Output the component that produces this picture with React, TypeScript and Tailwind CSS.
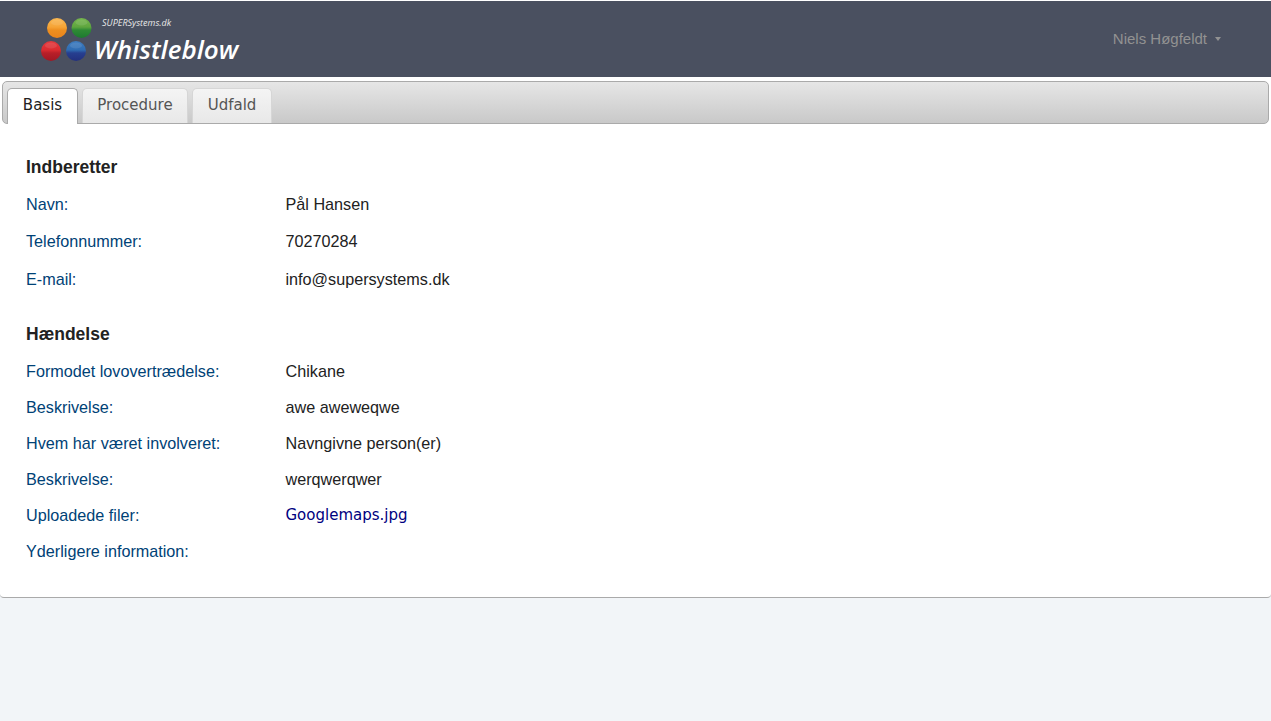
const rows2: [string, string][] = [
  ["Formodet lovovertrædelse:", "Chikane"],
  ["Beskrivelse:", "awe aweweqwe"],
  ["Hvem har været involveret:", "Navngivne person(er)"],
  ["Beskrivelse:", "werqwerqwer"],
];

function Ball({ cx, cy, top, mid, bottom, dark, id }: { cx: number; cy: number; top: string; mid: string; bottom: string; dark: string; id: string }) {
  return (
    <g>
      <defs>
        <linearGradient id={id} x1="0" y1="0" x2="0" y2="1">
          <stop offset="0" stopColor={top} />
          <stop offset="0.45" stopColor={mid} />
          <stop offset="0.6" stopColor={bottom} />
          <stop offset="1" stopColor={dark} />
        </linearGradient>
      </defs>
      <circle cx={cx} cy={cy} r="10" fill={`url(#${id})`} />
      <ellipse cx={cx} cy={cy - 5.5} rx="6" ry="3" fill="#ffffff" fillOpacity="0.1" />
    </g>
  );
}

function Logo() {
  return (
    <div className="relative w-[240px] h-[76px] shrink-0">
      <svg className="absolute left-[40px] top-[15px]" width="54" height="48" viewBox="0 0 54 48">
        <Ball id="o" cx={17} cy={12} top="#f9b650" mid="#f6a436" bottom="#ee8f20" dark="#ea841c" />
        <Ball id="g" cx={41.5} cy={12} top="#75b54c" mid="#5fa63f" bottom="#2f8a35" dark="#1c7a30" />
        <Ball id="r" cx={11} cy={35} top="#e23a3e" mid="#da2b30" bottom="#b81f28" dark="#a01824" />
        <Ball id="b" cx={36} cy={35} top="#3d7cc0" mid="#2f6cb2" bottom="#263f90" dark="#22307e" />
      </svg>
      <span className="absolute left-[102px] top-[16px] text-[9px] leading-[12px] italic text-[#e8e8e8] font-['Open_Sans',sans-serif]">SUPERSystems.dk</span>
      <span className="absolute left-[94px] top-[31px] text-[26px] leading-[34px] italic font-semibold text-white font-['Open_Sans',sans-serif]">Whistleblow</span>
    </div>
  );
}

function Tab({ label, active, width }: { label: string; active?: boolean; width: string }) {
  return active ? (
    <div className={`${width} h-[36px] -mb-[1px] flex items-center justify-center rounded-t-[5px] border border-b-0 border-[#aaaaaa] bg-white text-[#212121] text-[15px] font-['DejaVu_Sans',sans-serif] pb-[4px]`}>
      {label}
    </div>
  ) : (
    <div className={`${width} h-[35px] flex items-center justify-center rounded-t-[5px] border border-b-0 border-[#d6d6d6] bg-gradient-to-b from-[#f4f4f4] to-[#e8e8e8] text-[#555555] text-[15px] font-['DejaVu_Sans',sans-serif] pb-[3px]`}>
      {label}
    </div>
  );
}

function Row({ label, value, className }: { label: string; value: string; className: string }) {
  return (
    <div className={`flex ${className}`}>
      <div className="w-[259.5px] text-[#004276]">{label}</div>
      <div className="text-[#222222]">{value}</div>
    </div>
  );
}

export default function App() {
  return (
    <div className="min-h-[721px] bg-[#f2f5f8] font-['Liberation_Sans',sans-serif] text-[16.2px] leading-[24px]">
      <div className="h-[1px] bg-[#ffffff]" />
      <header className="h-[76px] bg-[#4a5060] flex items-center justify-between">
        <Logo />
        <div className="flex items-center gap-[8px] pr-[50px] pb-[1px] text-[#929292] text-[15px]">
          <span>Niels Høgfeldt</span>
          <span className="w-0 h-0 border-x-[3px] border-x-transparent border-t-[4px] border-t-[#929292]" />
        </div>
      </header>
      <main className="bg-white rounded-b-[4px] border-b border-[#aaaaaa] h-[521px] pt-[4px]">
        <div className="mx-[2px] h-[43px] pl-[4px] flex items-end gap-[4px] rounded-[5px] border border-[#aaaaaa] bg-gradient-to-b from-[#e6e6e6] to-[#c9c9c9]">
          <Tab label="Basis" active width="w-[71px]" />
          <Tab label="Procedure" width="w-[106px]" />
          <Tab label="Udfald" width="w-[80px]" />
        </div>
        <div className="px-[26px] pt-[31px]">
          <h2 className="font-bold text-[#222222] text-[17.5px] h-[26px]">Indberetter</h2>
          <Row label="Navn:" value="Pål Hansen" className="mt-[11px] h-[37px]" />
          <Row label="Telefonnummer:" value="70270284" className="h-[38px]" />
          <Row label="E-mail:" value="info@supersystems.dk" className="h-[24px]" />
          <h2 className="font-bold text-[#222222] text-[17.5px] h-[26px] mt-[31px]">Hændelse</h2>
          <div className="mt-[11px]">
            {rows2.map(([l, v], i) => (
              <Row key={i} label={l} value={v} className="h-[36px]" />
            ))}
            <div className="flex h-[36px]">
              <div className="w-[259.5px] text-[#004276]">Uploadede filer:</div>
              <div className="text-[#000080] text-[15px] font-['DejaVu_Sans',sans-serif]">Googlemaps.jpg</div>
            </div>
            <Row label="Yderligere information:" value="" className="h-[36px]" />
          </div>
        </div>
      </main>
    </div>
  );
}
